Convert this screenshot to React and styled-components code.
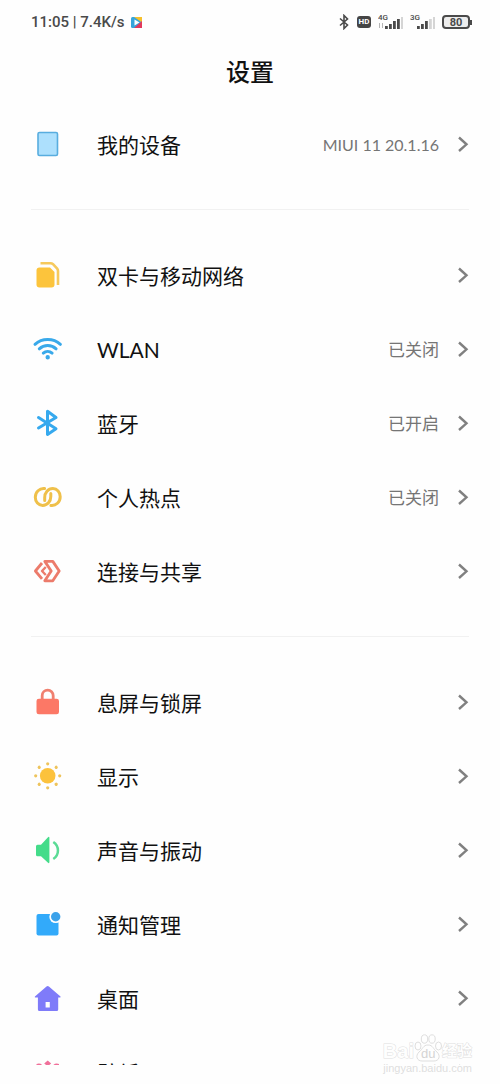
import React from "react";
import styled, { createGlobalStyle } from "styled-components";

const GlobalStyle = createGlobalStyle`
    * {
        box-sizing: border-box;
    }

    body {
        margin: 0;
        background-color: #fefefe;
        font-family: Lato, "Noto Sans CJK SC", sans-serif;
    }
`;

const Page = styled.div`
    position: relative;
    display: flex;
    flex-direction: column;
    height: 100vh;
    padding-bottom: 19px;
    overflow: hidden;
`;

const StatusBar = styled.div`
    display: flex;
    justify-content: space-between;
    align-items: center;
    flex-shrink: 0;
    height: 44px;
    padding: 0 28px 0 31px;
    color: #4a4a4a;
    font-family: Roboto, sans-serif;
`;

const StatusGroup = styled.div`
    display: flex;
    align-items: center;
    gap: ${(props) => props.$gap}px;
`;

const StatusText = styled.span`
    font-size: 15px;
    line-height: 20px;
    font-weight: 500;
`;

const HdBadge = styled.span`
    width: 14px;
    height: 12px;
    border-radius: 3px;
    background-color: #454545;
    color: white;
    font-size: 8px;
    line-height: 12px;
    font-weight: 700;
    text-align: center;
`;

const Battery = styled.span`
    display: flex;
    align-items: center;

    &::after {
        content: "";
        width: 2px;
        height: 5px;
        background-color: #4a4a4a;
    }
`;

const BatteryLevel = styled.span`
    width: 28px;
    height: 14px;
    border: 2px solid #4a4a4a;
    border-radius: 4px;
    background-color: #ededed;
    font-size: 11px;
    line-height: 11px;
    font-weight: 700;
    text-align: center;
`;

const Title = styled.h1`
    flex-shrink: 0;
    margin: 0;
    height: 63px;
    padding-top: 10px;
    color: #111111;
    font-size: 24px;
    line-height: 36px;
    font-weight: 500;
    text-align: center;
`;

const List = styled.main`
    flex: 1;
    min-height: 0;
    overflow: hidden;
`;

const Section = styled.section`
    padding: 0 31px;

    & + &::before {
        content: "";
        display: block;
        height: 1px;
        margin: 28px 0;
        background-color: #f1f1f1;
    }
`;

const Row = styled.button`
    display: flex;
    align-items: center;
    width: 100%;
    height: 74px;
    padding: 0;
    border: none;
    background: none;
    font-family: inherit;
    text-align: left;
    cursor: pointer;
`;

const RowIcon = styled.svg`
    flex-shrink: 0;
    width: 32px;
    height: 32px;
    margin-right: 34px;
`;

const RowLabel = styled.span`
    flex: 1;
    padding-top: 2px;
    color: #111111;
    font-size: 21px;
    line-height: 30px;
`;

const RowValue = styled.span`
    padding-top: 2px;
    margin-right: 18px;
    color: #757575;
    font-size: ${(props) => (props.$version ? 16 : 17)}px;
    line-height: 24px;
`;

const Watermark = styled.div`
    position: absolute;
    right: 28px;
    bottom: 9px;
    color: #dedede;
    font-family: "Liberation Sans", "Noto Sans CJK SC", sans-serif;
    text-align: right;
`;

const WatermarkBrand = styled.div`
    display: flex;
    align-items: flex-end;
    justify-content: flex-end;
    line-height: 22px;
`;

const WatermarkText = styled.span`
    color: #fefefe;
    font-size: ${(props) => props.$size}px;
    font-weight: 700;
    -webkit-text-stroke: 1px #dedede;
    paint-order: stroke fill;
`;

const WatermarkPaw = styled.svg`
    width: 28px;
    height: 28px;
`;

const WatermarkUrl = styled.div`
    font-size: 11px;
    line-height: 13px;
`;

const icons = {
    device: (
        <rect x="7" y="4.5" width="19.5" height="23" rx="1.5" fill="#ade0fd" stroke="#58addf" strokeWidth="1.6" />
    ),
    sim: (
        <>
            <path d="M8.5 8.5H19L23.5 13V25.5Q23.5 28.5 20.5 28.5H8.5Q5.5 28.5 5.5 25.5V11.5Q5.5 8.5 8.5 8.5Z" fill="#fcc43c" />
            <path d="M9.5 4.2H19.5Q21 4.2 22 5.2L26.2 9.7Q27 10.6 27 12V26" fill="none" stroke="#f6c95c" strokeWidth="2.6" />
        </>
    ),
    wlan: (
        <g fill="none" stroke="#39a9ea" strokeWidth="3" strokeLinecap="round">
            <path d="M4 11.3C11 4.9 22.4 4.9 29.4 11.3" />
            <path d="M8.3 15.8C13 11.5 20.4 11.5 25.1 15.8" />
            <path d="M12.3 20.1C14.8 17.9 18.6 17.9 21.1 20.1" />
            <circle cx="16.7" cy="24.2" r="1.2" fill="#39a9ea" strokeWidth="2" />
        </g>
    ),
    bluetooth: (
        <path d="M7.5 10.5L25 21.7L16.5 27.4V4.2L25 10.5L7.5 21" fill="none" stroke="#36a9ee" strokeWidth="3" strokeLinecap="round" strokeLinejoin="round" />
    ),
    hotspot: (
        <g fill="none" stroke="#efc04a" strokeWidth="3" strokeLinecap="round">
            <path d="M13.6 7.6C8.5 7 4.3 11 4.3 16.3C4.3 21 7.4 24.4 11.6 24.4C16.5 24.4 19.8 20.5 19.8 15.5V12.5" />
            <path d="M19.9 24.4C25 25 29.2 21 29.2 15.7C29.2 11 26.1 7.6 21.9 7.6C17 7.6 13.7 11.5 13.7 16.5V19.5" />
        </g>
    ),
    share: (
        <g fill="none" stroke="#ec7b6b" strokeWidth="2.8" strokeLinejoin="round">
            <path d="M13.8 6.4H21.8L28.2 16L21.8 25.8H13.8L20.2 16Z" />
            <path d="M11 8L4.4 16L11 23.8" />
            <path d="M14.8 12L11 16L14.8 20" strokeWidth="2.4" />
        </g>
    ),
    lock: (
        <>
            <rect x="5.5" y="12.7" width="22.5" height="15.6" rx="2.4" fill="#fc7866" />
            <path d="M11.2 13.5V9.7a5.5 5.5 0 0 1 11 0V13.5" fill="none" stroke="#f0806f" strokeWidth="2.8" />
        </>
    ),
    display: (
        <g fill="#fcc23c">
            <circle cx="16.7" cy="15.8" r="7.8" />
            {[0, 45, 90, 135, 180, 225, 270, 315].map((angle) => (
                <circle key={angle} cx="16.7" cy="3.8" r="1.6" fill="#eec45c" transform={`rotate(${angle} 16.7 15.8)`} />
            ))}
        </g>
    ),
    sound: (
        <>
            <path d="M6.5 10.7H10L17 3.2Q18.4 2.2 18.4 4V28Q18.4 29.8 17 28.8L10 22.3H6.5Q5 22.3 5 20.8V12.2Q5 10.7 6.5 10.7Z" fill="#44dc8a" />
            <path d="M22.3 8C28.5 12 28.5 21 22.3 25" fill="none" stroke="#5bdb96" strokeWidth="2.5" />
        </>
    ),
    notification: (
        <>
            <rect x="5.5" y="6" width="22" height="21.5" rx="2" fill="#32aafa" />
            <circle cx="24.7" cy="8.7" r="6.4" fill="#fefefe" />
            <circle cx="24.7" cy="8.7" r="4.7" fill="#3ba2ea" />
        </>
    ),
    home: (
        <path fillRule="evenodd" d="M15.5 4.6Q16.7 3.5 17.9 4.6L29.5 14.4Q30 15.4 29 15.4H27.2V27.5Q27.2 29 25.7 29H8.4Q6.9 29 6.9 27.5V15.4H4.4Q3.4 15.4 3.9 14.4ZM14.6 20V25.6H18.8V20Z" fill="#7f7bf9" />
    ),
    wallpaper: (
        <g fill="#f0709a">
            <path d="M16.7 4.6L20.2 7.4L16.7 10.4L13.2 7.4Z" />
            <path d="M5.5 8Q9.5 6.5 12 10L9 13Q5.5 12 5.5 8Z" />
            <path d="M28 8Q24 6.5 21.5 10L24.5 13Q28 12 28 8Z" />
            <circle cx="16.7" cy="18" r="5" />
        </g>
    ),
};

const sections = [
    [{ icon: "device", label: "我的设备", value: "MIUI 11 20.1.16", version: true }],
    [
        { icon: "sim", label: "双卡与移动网络" },
        { icon: "wlan", label: "WLAN", value: "已关闭" },
        { icon: "bluetooth", label: "蓝牙", value: "已开启" },
        { icon: "hotspot", label: "个人热点", value: "已关闭" },
        { icon: "share", label: "连接与共享" },
    ],
    [
        { icon: "lock", label: "息屏与锁屏" },
        { icon: "display", label: "显示" },
        { icon: "sound", label: "声音与振动" },
        { icon: "notification", label: "通知管理" },
        { icon: "home", label: "桌面" },
        { icon: "wallpaper", label: "壁纸" },
    ],
];

const Chevron = () => (
    <svg width="12" height="18" viewBox="0 0 12 18" fill="none" stroke="#808080" strokeWidth="2.4">
        <path d="M2 2.5L9.5 9.3L2 16" />
    </svg>
);

const Signal = ({ network, level, arrows }) => (
    <svg width="25" height="18" viewBox="0 0 25 18" fill="#4a4a4a">
        <text x="0" y="7" fontSize="8" fontWeight="500">{network}</text>
        {arrows && <path d="M1.5 10V15M4.5 10V15" stroke="#b5b5b5" strokeWidth="1" />}
        {[3, 5, 8, 10, 12].map((height, i) => (
            <rect key={height} x={7 + i * 4} y={16 - height} width="2.8" height={height} fill={i < level ? "#4a4a4a" : "#d5d5d5"} />
        ))}
    </svg>
);

const SettingRow = ({ icon, label, value, version }) => {
    return (
        <Row type="button">
            <RowIcon viewBox="0 0 32 32">{icons[icon]}</RowIcon>
            <RowLabel>{label}</RowLabel>
            {value && <RowValue $version={version}>{value}</RowValue>}
            <Chevron />
        </Row>
    );
};

export default function App() {
    return (
        <>
            <GlobalStyle />
            <Page>
                <StatusBar>
                    <StatusGroup $gap={6}>
                        <StatusText>11:05 | 7.4K/s</StatusText>
                        <svg width="11" height="11" viewBox="0 0 11 11">
                            <rect width="11" height="11" rx="1.5" fill="#35a5dc" />
                            <path d="M3 0H11V5.5Z" fill="#f6c02c" />
                            <path d="M11 4V11H3Z" fill="#e2395c" />
                            <path d="M3.5 2.5L8.5 5.5L3.5 8.5Z" fill="white" />
                        </svg>
                    </StatusGroup>
                    <StatusGroup $gap={7}>
                        <svg width="11" height="16" viewBox="0 0 11 16" fill="none" stroke="#4a4a4a" strokeWidth="1.6">
                            <path d="M1 4.5L8.5 11L5 14.5V1.5L8.5 5L1 11.5" />
                        </svg>
                        <HdBadge>HD</HdBadge>
                        <Signal network="4G" level={4} arrows />
                        <Signal network="3G" level={3} />
                        <Battery>
                            <BatteryLevel>80</BatteryLevel>
                        </Battery>
                    </StatusGroup>
                </StatusBar>
                <Title>设置</Title>
                <List>
                    {sections.map((rows) => (
                        <Section key={rows[0].label}>
                            {rows.map((row) => (
                                <SettingRow key={row.label} {...row} />
                            ))}
                        </Section>
                    ))}
                </List>
                <Watermark>
                    <WatermarkBrand>
                        <WatermarkText $size={20}>Bai</WatermarkText>
                        <WatermarkPaw viewBox="0 0 28 28" fill="#fefefe" stroke="#dedede" strokeWidth="1">
                            <ellipse cx="10.5" cy="5" rx="3.2" ry="4.2" />
                            <ellipse cx="18" cy="5" rx="3.2" ry="4.2" />
                            <ellipse cx="4" cy="12" rx="3" ry="4" />
                            <ellipse cx="24.5" cy="12" rx="3" ry="4" />
                            <path d="M14 11C19 11 19 15 23 18C27 22 25 27 20 27H8C3 27 1 22 5 18C9 15 9 11 14 11Z" />
                            <text x="7" y="24" fontSize="13" fill="#d4d4d4" stroke="none">du</text>
                        </WatermarkPaw>
                        <WatermarkText $size={15}>经验</WatermarkText>
                    </WatermarkBrand>
                    <WatermarkUrl>jingyan.baidu.com</WatermarkUrl>
                </Watermark>
            </Page>
        </>
    );
}
